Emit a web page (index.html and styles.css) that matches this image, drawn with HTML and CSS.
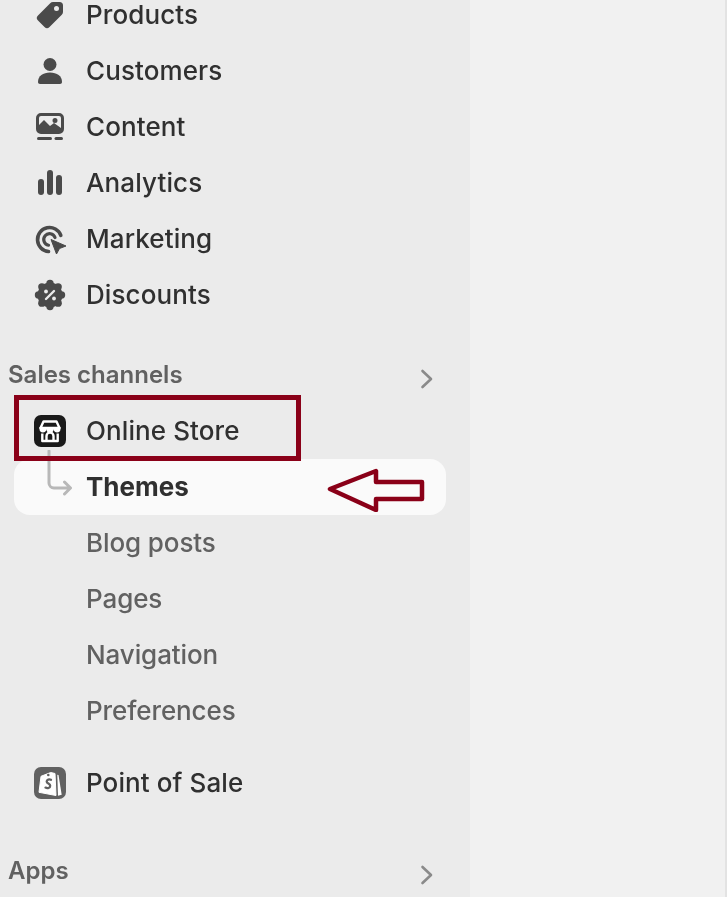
FILE: index.html
```html
<!DOCTYPE html>
<html lang="en">
<head>
    <meta charset="UTF-8">
    <meta name="viewport" content="width=device-width, initial-scale=1.0">
    <title>Online Store navigation</title>
    <link rel="stylesheet" href="styles.css">
</head>
<body>
    <div class="sidebar">
        <div class="nav-item">
            <svg class="icon" viewBox="0 0 28 28"><path fill="#4a4a4a" fill-rule="evenodd" d="M17 1h6.500A3.500 3.500 0 0 1 27 4.500V11a4 4 0 0 1-1.200 2.800L13.500 26a3.500 3.500 0 0 1-5 0L2 19.500a3.500 3.500 0 0 1 0-5L14.200 2.200A4 4 0 0 1 17 1zm3.500 4a2.500 2.500 0 1 0 0 5 2.500 2.500 0 0 0 0-5z"/></svg>
            <span>Products</span>
        </div>
        <div class="nav-item">
            <svg class="icon" viewBox="0 0 28 28"><circle cx="14" cy="7.500" r="6.500" fill="#4a4a4a"/><path fill="#4a4a4a" d="M2 25c0-6 5-9.500 12-9.500S26 19 26 25c0 1.200-.8 2-2 2H4c-1.200 0-2-.8-2-2z"/></svg>
            <span>Customers</span>
        </div>
        <div class="nav-item">
            <svg class="icon" viewBox="0 0 28 28"><path fill="#4a4a4a" fill-rule="evenodd" d="M5 0h18a5 5 0 0 1 5 5v11a5 5 0 0 1-5 5H5a5 5 0 0 1-5-5V5a5 5 0 0 1 5-5zm0 3a2 2 0 0 0-2 2v7l5-5 6 6 4-3 7 5V5a2 2 0 0 0-2-2H5zm14 2a2.500 2.500 0 1 0 0 5 2.500 2.500 0 0 0 0-5z"/><rect x="1" y="24" width="15" height="3" rx="1.500" fill="#4a4a4a"/><rect x="18.500" y="24" width="8.500" height="3" rx="1.500" fill="#4a4a4a"/></svg>
            <span>Content</span>
        </div>
        <div class="nav-item">
            <svg class="icon" viewBox="0 0 28 28"><rect x="2" y="10" width="6" height="16" rx="3" fill="#4a4a4a"/><rect x="11" y="1" width="6" height="25" rx="3" fill="#4a4a4a"/><rect x="20" y="6" width="6" height="20" rx="3" fill="#4a4a4a"/></svg>
            <span>Analytics</span>
        </div>
        <div class="nav-item">
            <svg class="icon" viewBox="0 0 28 28"><path fill="none" stroke="#4a4a4a" stroke-width="3.600" stroke-linecap="round" d="M24.800 10.400A12 12 0 1 0 12.500 26.500"/><path fill="none" stroke="#4a4a4a" stroke-width="3.200" stroke-linecap="round" d="M19 12.500A5.800 5.800 0 1 0 12.500 20.200"/><path fill="#4a4a4a" stroke="#4a4a4a" stroke-linejoin="round" d="M15 14.500L30 21l-6.500 2.500L20.500 29z"/></svg>
            <span>Marketing</span>
        </div>
        <div class="nav-item">
            <svg class="icon" viewBox="0 0 28 28">
                <g fill="#4a4a4a">
                    <circle cx="14" cy="14" r="12.500"/>
                    <circle cx="25.500" cy="14" r="3.700"/>
                    <circle cx="22.130" cy="22.130" r="3.700"/>
                    <circle cx="14" cy="25.500" r="3.700"/>
                    <circle cx="5.870" cy="22.130" r="3.700"/>
                    <circle cx="2.500" cy="14" r="3.700"/>
                    <circle cx="5.870" cy="5.870" r="3.700"/>
                    <circle cx="14" cy="2.500" r="3.700"/>
                    <circle cx="22.130" cy="5.870" r="3.700"/>
                </g>
                <path stroke="#ebebeb" stroke-width="2.400" stroke-linecap="round" d="M18 10L10 18"/>
                <circle cx="10" cy="10.500" r="1.900" fill="#ebebeb"/>
                <circle cx="18" cy="17.500" r="1.900" fill="#ebebeb"/>
            </svg>
            <span>Discounts</span>
        </div>

        <div class="section-head first">
            <span>Sales channels</span>
            <svg class="chevron" viewBox="0 0 14 20"><path fill="none" stroke="#8a8a8a" stroke-width="2.600" stroke-linecap="round" stroke-linejoin="round" d="M2.500 2l8.500 8-8.500 8"/></svg>
        </div>

        <div class="nav-item channel">
            <svg class="app-icon" viewBox="0 0 32 32">
                <rect width="32" height="32" rx="7" fill="#1a1a1a"/>
                <path fill="none" stroke="#fff" stroke-width="2.400" stroke-linejoin="round" d="M9.500 6.500h13L25.500 13h-19z"/>
                <path fill="#fff" d="M5.500 12h21v2a3.300 3.300 0 0 1-6.800 0 3.700 3.700 0 0 1-7.400 0 3.300 3.300 0 0 1-6.800 0z"/>
                <path fill="none" stroke="#fff" stroke-width="2.400" stroke-linejoin="round" d="M8.300 18.500V26h15.400v-7.500M12.500 26v-5a3.500 3.500 0 0 1 7 0v5"/>
            </svg>
            <span>Online Store</span>
        </div>
        <div class="sub-item active">
            <svg class="branch" viewBox="0 0 28 48"><path fill="none" stroke="#b8b8b8" stroke-width="3" stroke-linecap="round" stroke-linejoin="round" d="M2 1v32a5 5 0 0 0 5 5h16M17.500 32l6 6-6 6"/></svg>
            <span>Themes</span>
        </div>
        <div class="sub-item"><span>Blog posts</span></div>
        <div class="sub-item"><span>Pages</span></div>
        <div class="sub-item"><span>Navigation</span></div>
        <div class="sub-item"><span>Preferences</span></div>

        <div class="nav-item channel pos">
            <svg class="app-icon" viewBox="0 0 32 32">
                <rect width="32" height="32" rx="7" fill="#616161"/>
                <path fill="#fff" stroke="#fff" stroke-linejoin="round" d="M7 9.300L16.700 5.500 21 6.500 22 28.500 5 25.300z"/>
                <path fill="#fff" d="M23.300 7.700L24.500 8l3.200 19.700-3.700 1z"/>
                <circle cx="14.300" cy="8" r="1.300" fill="#616161"/>
                <path fill="none" stroke="#616161" stroke-width="2.300" stroke-linecap="round" d="M17 12.800c-1.800-.9-4.300-.3-4.300 1.700 0 2.200 3.500 2 3.500 4.300 0 2.300-2.800 2.900-4.700 1.800"/>
            </svg>
            <span>Point of Sale</span>
        </div>

        <div class="section-head apps">
            <span>Apps</span>
            <svg class="chevron" viewBox="0 0 14 20"><path fill="none" stroke="#8a8a8a" stroke-width="2.600" stroke-linecap="round" stroke-linejoin="round" d="M2.500 2l8.500 8-8.500 8"/></svg>
        </div>
    </div>
    <div class="main"></div>

    <!-- annotations on top of the screenshot -->
    <div class="callout-box"></div>
    <svg class="callout-arrow" viewBox="0 0 100 44"><path fill="none" stroke="#8a0018" stroke-width="4.500" stroke-linejoin="round" d="M3 21L49 3v11h46v17H49v11z"/></svg>
</body>
</html>
```

FILE: styles.css
```css
* {
    box-sizing: border-box;
}

html, body {
    margin: 0;
    height: 100%;
    overflow: hidden;
}

body {
    display: flex;
    font-family: Inter, "Liberation Sans", sans-serif;
    background-color: #f1f1f1;
}

.sidebar {
    width: 470px;
    height: 897px;
    flex-shrink: 0;
    background-color: #ebebeb;
    padding: 0 24px 0 14px;
}

.sidebar span {
    will-change: opacity;
}

.main {
    flex: 1;
    border-right: 2px solid #e3e3e3;
}

.nav-item, .sub-item {
    height: 56px;
    display: flex;
    align-items: center;
    font-size: 26px;
    font-weight: 500;
    letter-spacing: 0.1px;
    color: #303030;
    padding-left: 72px;
    position: relative;
    border-radius: 16px;
}

.nav-item:first-child {
    margin-top: -14px;
}

.channel, .sub-item {
    padding-bottom: 2px;
}

.icon {
    position: absolute;
    left: 22px;
    top: 15px;
    width: 28px;
    height: 28px;
    overflow: visible;
}

.app-icon {
    position: absolute;
    left: 20px;
    top: 12px;
    width: 32px;
    height: 32px;
}

.sub-item {
    color: #616161;
    letter-spacing: -0.1px;
}

.sub-item.active {
    background-color: #fafafa;
    color: #303030;
    font-weight: 700;
    letter-spacing: 0;
}

.branch {
    position: absolute;
    left: 33px;
    top: -9px;
    width: 28px;
    height: 48px;
}

.section-head {
    display: flex;
    justify-content: space-between;
    align-items: center;
    margin-left: -6px;
    font-size: 24px;
    font-weight: 600;
    color: #616161;
    height: 40px;
}

.section-head.first {
    margin-top: 32px;
    margin-bottom: 9px;
}

.section-head.apps {
    margin-top: 39px;
}

.chevron {
    width: 14px;
    height: 20px;
    margin-right: 12px;
    margin-top: 10px;
}

.pos {
    margin-top: 16px;
}

.callout-box {
    position: absolute;
    left: 14px;
    top: 395px;
    width: 287px;
    height: 66px;
    border: 5px solid #8a0018;
}

.callout-arrow {
    position: absolute;
    left: 327px;
    top: 468px;
    width: 100px;
    height: 44px;
}
```
